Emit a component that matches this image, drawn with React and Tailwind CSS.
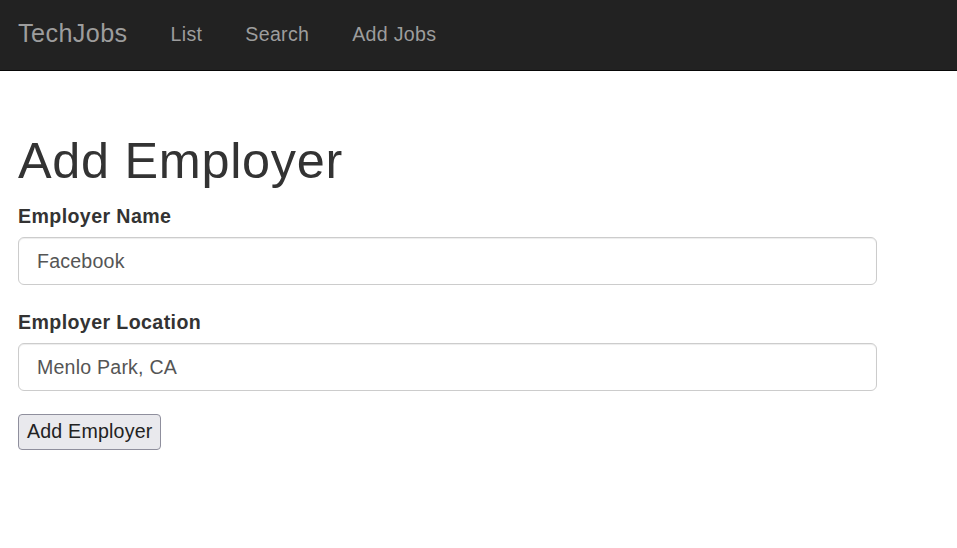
const FONT = { fontFamily: '"Liberation Sans", Arial, sans-serif' };

const LABEL = 'block text-[19.6px] leading-[28px] font-bold tracking-[0.4px] text-[#333] mb-[7px]';
const INPUT = 'block w-[859px] h-[48px] pl-[18px] pr-[17px] border border-[#ccc] rounded-[6px] text-[19.6px] tracking-[0.2px] text-[#555] bg-white shadow-[inset_0_1px_1px_rgba(0,0,0,0.075)] focus:outline-none';
const NAV_LINK = 'mt-[2px] ml-[43px] text-[19.6px] leading-[28px] tracking-[0.3px] text-[#9d9d9d]';

export default function App() {
  return (
    <div className="min-h-[548px] bg-white" style={FONT}>
      <nav className="h-[71px] bg-[#222] border-b border-[#080808] flex items-start pt-[18px] pl-[18px]">
        <a className="mt-[1px] text-[25.2px] leading-[28px] tracking-[0.4px] text-[#9d9d9d]">TechJobs</a>
        <a className={NAV_LINK}>List</a>
        <a className={NAV_LINK}>Search</a>
        <a className={NAV_LINK}>Add Jobs</a>
      </nav>

      <div className="px-[18px]">
        <h1 className="mt-[62px] mb-[14px] text-[50.4px] leading-[55px] tracking-[0.7px] text-[#333] font-normal">Add Employer</h1>
        <form onSubmit={(e) => e.preventDefault()}>
          <div>
            <label className={LABEL}>Employer Name</label>
            <input className={INPUT} defaultValue="Facebook" />
          </div>
          <div className="mt-[23px]">
            <label className={LABEL}>Employer Location</label>
            <input className={INPUT} defaultValue="Menlo Park, CA" />
          </div>
          <button type="submit" className="mt-[23px] h-[36px] px-[8px] bg-[#e9e9ed] border border-[#8f8f9d] rounded-[4px] text-[19.6px] tracking-[0.2px] text-[#222]">Add Employer</button>
        </form>
      </div>
    </div>
  );
}
